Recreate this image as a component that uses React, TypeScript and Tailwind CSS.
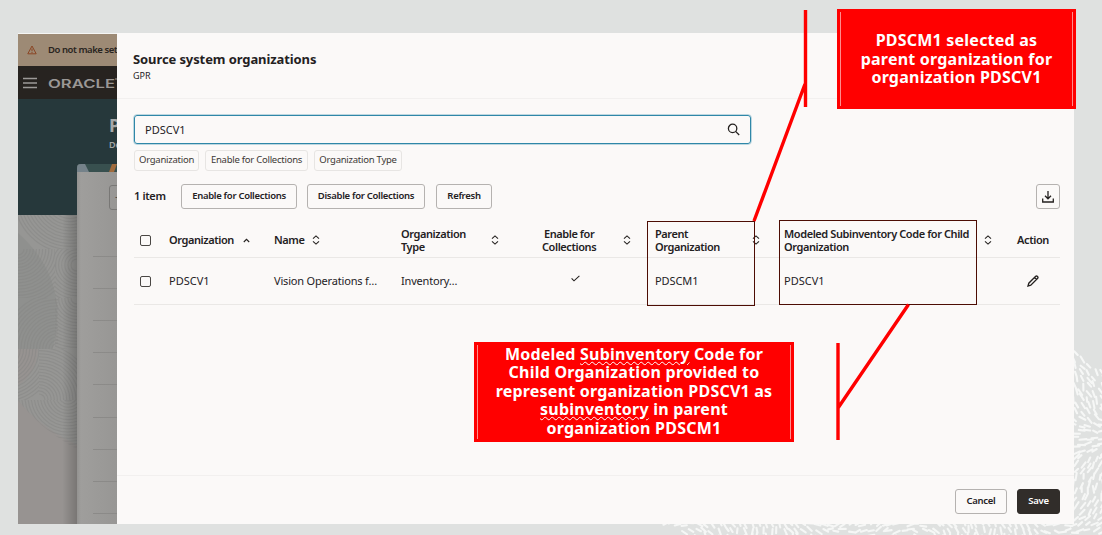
import React from "react";

const INK = "#24211f";

const SortIcon: React.FC = () => (
  <svg width="8" height="10" viewBox="0 0 8 10" fill="none" stroke={INK} strokeWidth="1.1" className="shrink-0">
    <path d="M1 3.7 4 0.9 7 3.7M1 6.3 4 9.1 7 6.3" />
  </svg>
);

const Checkbox: React.FC = () => (
  <span className="block w-[11px] h-[11px] rounded-[2px] border border-[#4a4744]" />
);

const Chip: React.FC<{ className: string; children: React.ReactNode }> = ({ className, children }) => (
  <span
    className={`flex items-center justify-center h-[21px] rounded-[3px] border border-[#e7e5e3] text-[9.5px] whitespace-nowrap text-[#3b3835] ${className}`}
  >
    {children}
  </span>
);

const Button: React.FC<{ className: string; children: React.ReactNode }> = ({ className, children }) => (
  <button
    className={`flex items-center justify-center h-[25px] rounded-[3px] border text-[9.5px] font-semibold whitespace-nowrap ${className}`}
  >
    {children}
  </button>
);

// Short strokes scattered along a swirling direction field
const strokes: string[] = [];
let seed = 7;
const rand = () => {
  seed = (seed * 16807) % 2147483647;
  return seed / 2147483647;
};
for (let y = 344; y < 540; y += 6.6) {
  for (let x = 664; x < 1106; x += 6.6) {
    if (x < 1070 && y < 518) continue;
    const px = x + rand() * 4;
    const py = y + rand() * 4;
    if (px > 1070 && py < 350 + (px - 1074) * 0.75) continue;
    if (px < 690 && py > 524 + (px - 664) * 0.5) continue;
    const a = Math.sin(px / 37) * 0.9 + Math.cos(py / 31) * 1.3 + 0.4 + rand() * 0.7;
    const len = 2.2 + rand() * 1.4;
    const dx = Math.cos(a) * len;
    const dy = Math.sin(a) * len;
    strokes.push(
      `M${(px - dx).toFixed(1)} ${(py - dy).toFixed(1)}L${(px + dx).toFixed(1)} ${(py + dy).toFixed(1)}`
    );
  }
}

const Backdrop: React.FC = () => (
  <svg width="1102" height="535" className="absolute inset-0">
    <path d={strokes.join("")} stroke="#f6f7f6" strokeWidth="2.1" strokeLinecap="round" />
  </svg>
);

// Quarter-circle ripple tiles: [x, y, w, h, cx, cy]
const tiles = [
  [0, 0, 59, 34, 52, -18],
  [0, 34, 37, 49, 0, 34],
  [37, 34, 22, 49, 59, 50],
  [0, 83, 40, 51, 40, 134],
  [37, 83, 22, 51, 59, 83],
  [0, 134, 21, 51, -16, 134],
  [21, 134, 38, 51, 21, 185],
  [0, 185, 59, 49, 50, 180],
];

const Ripples: React.FC = () => (
  <svg width="59" height="309" className="block">
    <defs>
      {tiles.map(([x, y, w, h], i) => (
        <clipPath key={i} id={`tile${i}`}>
          <rect x={x} y={y} width={w} height={h} />
        </clipPath>
      ))}
      <clipPath id="swirl">
        <path d="M0 0H59V234Q22 214 0 185Z" />
      </clipPath>
      <linearGradient id="edge">
        <stop offset="0.75" stopColor="#000" stopOpacity="0" />
        <stop offset="1" stopColor="#000" stopOpacity="0.2" />
      </linearGradient>
    </defs>
    <rect width="59" height="309" fill="#979391" />
    <path d="M0 0H59V230Q22 212 0 185V170Q18 160 20 134H0Z" fill="#969694" />
    <path d="M0 18Q36 50 39 92Q40 118 34 134H0Z" fill="#8f908e" />
    <g clipPath="url(#swirl)">
      {tiles.map(([, , , , cx, cy], i) => (
        <g key={i} clipPath={`url(#tile${i})`} fill="none" stroke="#868785" strokeWidth="1.1">
          {Array.from({ length: 17 }, (_, n) => (
            <circle key={n} cx={cx} cy={cy} r={6 + n * 3.1} opacity="0.55" />
          ))}
        </g>
      ))}
    </g>
    <rect width="59" height="309" fill="url(#edge)" />
  </svg>
);

const DimmedPage: React.FC = () => (
  <div className="w-[99px] shrink-0 flex flex-col overflow-hidden">
    <div className="h-[33px] shrink-0 border-t border-[#f5f5f4] bg-[#9d8a75] flex items-center pl-[9px] text-[9.5px] font-semibold text-[#292420] whitespace-nowrap">
      <svg width="10" height="10" viewBox="0 0 10 10" fill="none" stroke="#8a4524" strokeWidth="1" className="shrink-0 mr-[11px]">
        <path d="M5 1 9.2 8.8H0.8ZM5 3.6V6.3M5 7V8" />
      </svg>
      <span className="tracking-[-0.45px]">Do not make setup</span>
    </div>
    <div className="h-[33px] shrink-0 bg-[#272320] flex items-center pl-[5px]">
      <svg width="14" height="12" viewBox="0 0 14 12" stroke="#9d9a98" strokeWidth="1.5" className="shrink-0">
        <path d="M0 1.5H14M0 6H14M0 10.5H14" />
      </svg>
      <svg width="70" height="14" className="shrink-0 ml-[11px]">
        <text x="0" y="11.5" textLength="67" lengthAdjust="spacingAndGlyphs" fill="#9a9795" fontSize="12" fontWeight="600" fontFamily="Inter, sans-serif">
          ORACLE
        </text>
        <path d="M67 3H70" stroke="#9a9795" />
      </svg>
    </div>
    <div className="relative flex-1">
      <div className="h-[116px] bg-[#26383b] text-[#a5a8a8] pl-[91px] pt-[13px] overflow-hidden whitespace-nowrap">
        <div className="text-[18px] font-bold leading-[26px]">Plan Inputs</div>
        <div className="text-[9px] font-semibold leading-[13px]">Define</div>
      </div>
      <Ripples />
      {/* Page sheet lying over the hero and the ripples */}
      <div className="absolute left-[59px] top-[65px] w-[40px] h-[360px] bg-[#9f9e9c] rounded-tl-[4px] overflow-hidden">
        <svg width="40" height="8" className="block">
          <rect width="40" height="8" fill="#38504f" />
          <path d="M0 0H8L12 8H0Z" fill="#75828a" />
          <path d="M35 0H40L37 8H32Z" fill="#a06b3d" />
        </svg>
        <div className="ml-[32px] mt-[13px] w-[20px] h-[25px] rounded-[3px] border border-[#6f6e6c] pl-[5px] text-[10px] leading-[23px] text-[#2c2a28]">+</div>
        <div className="ml-[16px] mt-[15px]">
          {Array.from({ length: 10 }, (_, i) => (
            <div key={i} className="h-[32.1px] border-b border-[#8b8a88]" />
          ))}
        </div>
        <div className="absolute inset-x-0 top-[8px] bottom-0 bg-linear-to-r from-[#8c8b89]/60 via-transparent via-10% to-[#8c8b89]/40" />
      </div>
    </div>
  </div>
);

const Drawer: React.FC = () => (
  <div className="flex-1 min-w-0 bg-[#fbf9f8] flex flex-col">
    <header className="h-[66px] shrink-0 border-b border-[#f2f0ef] pl-[16px] pt-[17px]">
      <h1 className="text-[13px] leading-[18px] font-bold tracking-[-0.1px]">Source system organizations</h1>
      <p className="text-[9px] leading-[16px]">GPR</p>
    </header>

    <main className="flex-1 pl-[17px] pr-[14px] pt-[16px]">
      <div className="w-[617px] h-[29px] rounded-[3px] border-[1.5px] border-[#2f87a8] outline outline-[#2f87a8]/30 flex items-center justify-between pl-[10px] pr-[10px]">
        <span className="text-[11px] relative top-px">PDSCV1</span>
        <svg width="13" height="13" viewBox="0 0 13 13" fill="none" stroke={INK} strokeWidth="1.3">
          <circle cx="5.6" cy="5.4" r="4.2" />
          <path d="M8.6 8.4 12.2 12" />
        </svg>
      </div>
      <div className="flex gap-[6px] mt-[6px]">
        <Chip className="w-[65px] tracking-[-0.25px]">Organization</Chip>
        <Chip className="w-[103px] tracking-[-0.25px]">Enable for Collections</Chip>
        <Chip className="w-[88px] tracking-[-0.25px]">Organization Type</Chip>
      </div>

      <div className="flex items-center mt-[13px]">
        <span className="w-[47px] text-[11px] font-semibold tracking-[-0.35px] whitespace-nowrap">1 item</span>
        <Button className="w-[116px] border-[#b5b2b0] tracking-[-0.3px]">Enable for Collections</Button>
        <Button className="w-[118px] ml-[10px] border-[#b5b2b0] tracking-[-0.3px]">Disable for Collections</Button>
        <Button className="w-[56px] ml-[11px] border-[#b5b2b0] tracking-[-0.3px]">Refresh</Button>
        <Button className="w-[24px] ml-auto border-[#b5b2b0]">
          <svg width="12" height="12" viewBox="0 0 12 12" fill="none" stroke={INK} strokeWidth="1.3" className="shrink-0">
            <path d="M6 0V7.5M3 4.8 6 7.8 9 4.8M0.7 7.5V11H11.3V7.5" />
          </svg>
        </Button>
      </div>

      <div className="mt-[14px] text-[11px] leading-[13.5px] whitespace-nowrap">
        <div className="grid grid-cols-[35px_105px_127px_111px_143px_129px_222px_54px] h-[35px] items-center border-b border-[#eae8e6] font-semibold tracking-[-0.42px]">
          <div className="pl-[6px]"><Checkbox /></div>
          <div className="flex items-center">
            Organization
            <svg width="7" height="5" viewBox="0 0 7 5" fill="none" stroke={INK} strokeWidth="1.1" className="ml-[9px]">
              <path d="M0.8 4 3.5 1.3 6.2 4" />
            </svg>
          </div>
          <div className="flex items-center gap-[8px]">Name <SortIcon /></div>
          <div className="flex items-center justify-between pr-[13px]">
            <span>Organization<br />Type</span>
            <SortIcon />
          </div>
          <div className="flex items-center justify-between pl-[30px] pr-[24px]">
            <span className="text-center">Enable for<br />Collections</span>
            <SortIcon />
          </div>
          <div className="flex items-center justify-between pr-[24px]">
            <span>Parent<br />Organization</span>
            <SortIcon />
          </div>
          <div className="flex items-center justify-between pr-[14px]">
            <span>Modeled Subinventory Code for Child<br />Organization</span>
            <SortIcon />
          </div>
          <div className="text-center">Action</div>
        </div>
        <div className="grid grid-cols-[35px_105px_127px_111px_143px_129px_222px_54px] h-[47px] items-center border-b border-[#eae8e6]">
          <div className="pl-[6px]"><Checkbox /></div>
          <div>PDSCV1</div>
          <div className="tracking-[-0.18px]">Vision Operations f…</div>
          <div className="tracking-[-0.18px]">Inventory…</div>
          <div className="pl-[59px] pb-[6px]">
            <svg width="9" height="7" viewBox="0 0 9 7" fill="none" stroke={INK} strokeWidth="1.1">
              <path d="M0.6 3.4 3 5.8 8.4 0.8" />
            </svg>
          </div>
          <div className="tracking-[-0.1px]">PDSCM1</div>
          <div>PDSCV1</div>
          <div className="flex justify-center">
            <svg width="12" height="12" viewBox="0 0 12 12" fill="none" stroke={INK} strokeWidth="1.3">
              <path d="M1 11 1.8 8.2 8.7 1.3Q9.6 0.6 10.5 1.5T10.7 3.3L3.8 10.2ZM7.5 2.5 9.5 4.5" />
            </svg>
          </div>
        </div>
      </div>
    </main>

    <footer className="h-[49px] shrink-0 border-t border-[#f2f0ef] flex items-start justify-end gap-[10px] pt-[13px] pr-[14px]">
      <Button className="w-[52px] border-[#b5b2b0] tracking-[-0.3px]">Cancel</Button>
      <Button className="w-[43px] border-[#312d2a] bg-[#312d2a] text-white tracking-[-0.3px]">Save</Button>
    </footer>
  </div>
);

// Callout boxes, leader lines and outlines drawn over the screen
const Annotations: React.FC = () => (
  <>
    <div className="absolute left-[647px] top-[221px] w-[108px] h-[85px] border border-[#4d0d04]" />
    <div className="absolute left-[779px] top-[220px] w-[198px] h-[85px] border border-[#4d0d04]" />
    <svg width="1102" height="535" className="absolute inset-0" stroke="#ff0000" strokeWidth="3.4" fill="none">
      <path d="M805.5 10V107M805 84 754 221M838 343V440M838 408 908.5 304.5" />
    </svg>
    <div className="absolute left-[837px] top-[9px] w-[239px] h-[100px] bg-[#ff0000] px-[3px] py-[3px]">
      <div className="h-full border-x border-[#ff8c8c] flex items-center justify-center text-center text-white text-[16px] leading-[18.6px] tracking-[0.22px] font-bold whitespace-nowrap">
        <p>
          PDSCM1 selected as<br />
          parent organization for<br />
          organization PDSCV1
        </p>
      </div>
    </div>
    <div className="absolute left-[474px] top-[342px] w-[320px] h-[100px] bg-[#ff0000] px-[3px] py-[3px]">
      <div className="h-full border-x border-[#ff8c8c] flex items-center justify-center text-center text-white text-[16px] leading-[18.6px] tracking-[0.22px] font-bold whitespace-nowrap">
        <p className="mt-[-2px]">
          Modeled <span className="underline decoration-wavy decoration-[0.5px] underline-offset-[1px]">Subinventory</span> Code for<br />
          Child Organization provided to<br />
          represent organization PDSCV1 as<br />
          <span className="underline decoration-wavy decoration-[0.5px] underline-offset-[1px]">subinventory</span> in parent<br />
          organization PDSCM1
        </p>
      </div>
    </div>
  </>
);

const App: React.FC = () => {
  return (
    <div className="relative w-[1102px] h-[535px] overflow-hidden bg-[#dfe1e0] font-['Noto_Sans','Open_Sans',sans-serif] text-[#24211f]">
      <Backdrop />
      <div className="relative pl-[18px] pt-[33px]">
        <div className="flex w-[1056px] h-[491px] overflow-hidden">
          <DimmedPage />
          <Drawer />
        </div>
      </div>
      <Annotations />
    </div>
  );
};

export default App;
